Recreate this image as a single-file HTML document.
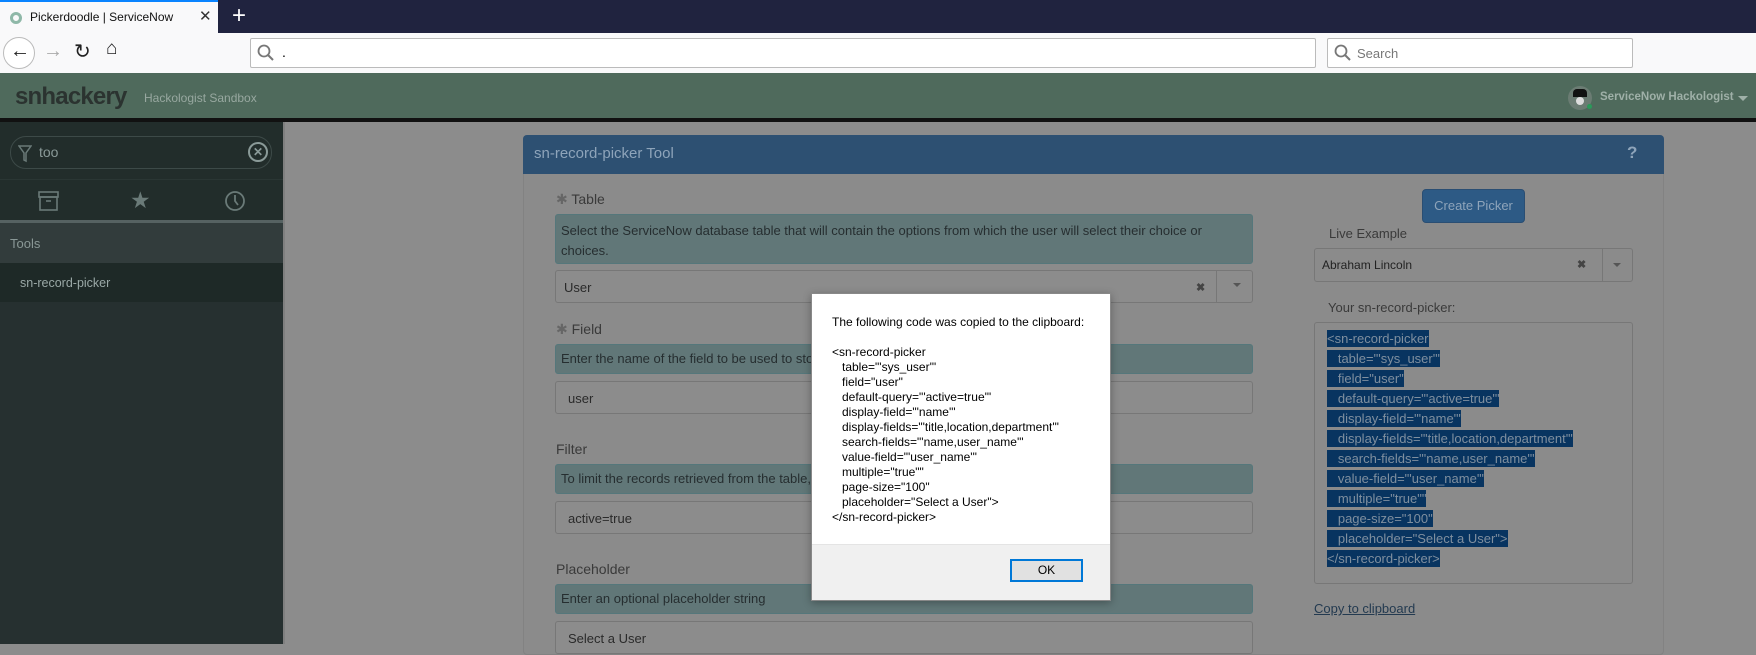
<!DOCTYPE html>
<html><head><meta charset="utf-8">
<style>
*{box-sizing:border-box;margin:0;padding:0}
body{width:1756px;height:644px;overflow:hidden;position:relative;font-family:"Liberation Sans",sans-serif;background:#8c8c8c}
.a{position:absolute}
.help{position:absolute;left:555px;width:698px;background:#617778;border:1px solid #55777b;border-radius:3px;font-size:13px;color:#262e30;padding:6px 5px;line-height:20px}
.inp{position:absolute;left:555px;width:698px;height:33px;border:1px solid #777;border-radius:3px;background:#8c8c8c;font-size:13px;color:#2a2a2a;padding:9px 8px}
.lbl{position:absolute;font-size:14px;color:#3a3a3a}
.code div{height:20px;line-height:20px}
.code span{background:#083460;color:#7f8f9f;padding:1px 0}
.dl{font-family:"Liberation Sans",Arial,sans-serif;font-size:12px;color:#000;line-height:15px}
</style></head><body>
<div class="a" style="left:0;top:0;width:1756px;height:33px;background:#20233f"></div>
<div class="a" style="left:0;top:0;width:218px;height:33px;background:#f9f9fa;border-top:2px solid #0a84ff"></div>
<div class="a" style="left:10px;top:12px;width:12px;height:12px;border-radius:50%;border:3px solid #8fb8a8"></div>
<div class="a" style="left:30px;top:10px;font-size:12px;color:#111">Pickerdoodle | ServiceNow</div>
<div class="a" style="left:199px;top:7px;font-size:15px;color:#333">✕</div>
<div class="a" style="left:232px;top:2px;font-size:24px;color:#fff;font-weight:300">+</div>
<div class="a" style="left:0;top:33px;width:1756px;height:40px;background:#f9f9fa"></div>
<div class="a" style="left:3px;top:37px;width:32px;height:32px;border:1px solid #bbb;border-radius:50%;background:#fff"></div>
<div class="a" style="left:10px;top:40px;font-size:20px;color:#222">←</div>
<div class="a" style="left:43px;top:40px;font-size:20px;color:#aaa">→</div>
<div class="a" style="left:74px;top:39px;font-size:20px;color:#222">↻</div>
<div class="a" style="left:106px;top:38px;font-size:19px;color:#222">⌂</div>
<div class="a" style="left:250px;top:38px;width:1066px;height:30px;background:#fff;border:1px solid #bbb;border-radius:2px"></div>
<svg class="a" style="left:257px;top:44px" width="18" height="18"><circle cx="7" cy="7" r="5.5" fill="none" stroke="#777" stroke-width="1.8"/><line x1="11" y1="11" x2="16" y2="16" stroke="#777" stroke-width="2"/></svg>
<div class="a" style="left:282px;top:44px;font-size:14px">.</div>
<div class="a" style="left:1327px;top:38px;width:306px;height:30px;background:#fff;border:1px solid #bbb;border-radius:2px"></div>
<svg class="a" style="left:1334px;top:44px" width="18" height="18"><circle cx="7" cy="7" r="5.5" fill="none" stroke="#777" stroke-width="1.8"/><line x1="11" y1="11" x2="16" y2="16" stroke="#777" stroke-width="2"/></svg>
<div class="a" style="left:1357px;top:46px;font-size:13px;color:#777">Search</div>
<div class="a" style="left:0;top:73px;width:1756px;height:45px;background:#4f6a5c"></div>
<div class="a" style="left:0;top:118px;width:1756px;height:4px;background:#111"></div>
<div class="a" style="left:15px;top:83px;font-size:24px;font-weight:bold;color:#2b3330;letter-spacing:-0.8px">snhackery</div>
<div class="a" style="left:144px;top:91px;font-size:12px;color:#98a8a0">Hackologist Sandbox</div>
<div class="a" style="left:1568px;top:86px;width:24px;height:24px;border-radius:50%;background:#6b7c73"></div>
<div class="a" style="left:1573px;top:89px;width:14px;height:8px;background:#111;border-radius:4px 4px 0 0"></div>
<div class="a" style="left:1576px;top:97px;width:8px;height:8px;background:#ddd;border-radius:50%"></div>
<div class="a" style="left:1587px;top:104px;width:5px;height:5px;background:#2a9a5a;border-radius:50%"></div>
<div class="a" style="left:1600px;top:91px;font-size:11.5px;color:#9fb0a8;font-weight:bold">ServiceNow Hackologist</div>
<div class="a" style="left:1738px;top:96px;border:5px solid transparent;border-top-color:#9fb0a8"></div>
<div class="a" style="left:0;top:122px;width:283px;height:522px;background:#263030"></div>
<div class="a" style="left:0;top:122px;width:283px;height:100px;background:#222d2b"></div>
<div class="a" style="left:10px;top:136px;width:262px;height:33px;border:1px solid #3d4a48;border-radius:16px"></div>
<svg class="a" style="left:18px;top:145px" width="14" height="18"><path d="M1 1h12l-5 7v8l-2-1v-7z" fill="none" stroke="#6a7a78" stroke-width="1.5"/></svg>
<div class="a" style="left:39px;top:144px;font-size:14px;color:#8a9a98">too</div>
<div class="a" style="left:248px;top:142px;width:20px;height:20px;border:2px solid #8a9a98;border-radius:50%;color:#8a9a98;font-size:12px;text-align:center;line-height:16px;font-weight:bold">✕</div>
<div class="a" style="left:0;top:179px;width:283px;height:1px;background:#2a3634"></div>
<svg class="a" style="left:38px;top:191px" width="21" height="21"><rect x="1" y="1" width="19" height="5" fill="none" stroke="#6a7a78" stroke-width="1.6"/><rect x="2" y="6" width="17" height="13" fill="none" stroke="#6a7a78" stroke-width="1.6"/><line x1="8" y1="10" x2="13" y2="10" stroke="#6a7a78" stroke-width="1.6"/></svg>
<div class="a" style="left:130px;top:187px;font-size:23px;color:#6a7a78">★</div>
<svg class="a" style="left:224px;top:190px" width="22" height="22"><circle cx="11" cy="11" r="9" fill="none" stroke="#6a7a78" stroke-width="1.8"/><path d="M11 5v6l3 4" fill="none" stroke="#6a7a78" stroke-width="1.8"/></svg>
<div class="a" style="left:0;top:220px;width:283px;height:3px;background:#566262"></div>
<div class="a" style="left:0;top:223px;width:283px;height:40px;background:#323c3c"></div>
<div class="a" style="left:10px;top:236px;font-size:13px;color:#8a9896">Tools</div>
<div class="a" style="left:0;top:263px;width:283px;height:39px;background:#1e2927"></div>
<div class="a" style="left:20px;top:276px;font-size:12.5px;color:#9aa8a6">sn-record-picker</div>
<div class="a" style="left:283px;top:122px;width:2px;height:522px;background:#7f7f7f"></div>
<div class="a" style="left:523px;top:135px;width:1141px;height:520px;border:1px solid #828282;border-radius:4px;background:#8b8b8b"></div>
<div class="a" style="left:523px;top:135px;width:1141px;height:39px;background:#2d5072;border-radius:4px 4px 0 0"></div>
<div class="a" style="left:534px;top:145px;font-size:15px;color:#8ea4ba">sn-record-picker Tool</div>
<div class="a" style="left:1627px;top:143px;font-size:17px;font-weight:bold;color:#8ea4ba">?</div>
<div class="lbl" style="left:556px;top:191px"><span style="color:#666">✱</span> Table</div>
<div class="help" style="top:214px;height:50px">Select the ServiceNow database table that will contain the options from which the user will select their choice or choices.</div>
<div class="inp" style="top:270px">User</div>
<div class="a" style="left:1196px;top:281px;font-size:11px;color:#444;font-weight:bold">✖</div>
<div class="a" style="left:1216px;top:270px;width:1px;height:33px;background:#777"></div>
<div class="a" style="left:1233px;top:283px;border:4px solid transparent;border-top-color:#555"></div>
<div class="lbl" style="left:556px;top:321px"><span style="color:#666">✱</span> Field</div>
<div class="help" style="top:344px;height:30px;padding-top:4px">Enter the name of the field to be used to store the value</div>
<div class="inp" style="top:381px;padding-left:12px">user</div>
<div class="lbl" style="left:556px;top:441px">Filter</div>
<div class="help" style="top:464px;height:30px;padding-top:4px">To limit the records retrieved from the table, enter an encoded query</div>
<div class="inp" style="top:501px;padding-left:12px">active=true</div>
<div class="lbl" style="left:556px;top:561px">Placeholder</div>
<div class="help" style="top:584px;height:30px;padding-top:4px">Enter an optional placeholder string</div>
<div class="inp" style="top:621px;padding-left:12px">Select a User</div>
<div class="a" style="left:1422px;top:189px;width:103px;height:34px;background:#2d5a85;border:1px solid #2a4e73;border-radius:4px;color:#8ea4ba;font-size:13px;text-align:center;line-height:32px">Create Picker</div>
<div class="a" style="left:1329px;top:226px;font-size:13px;color:#3a3a3a">Live Example</div>
<div class="a" style="left:1314px;top:248px;width:319px;height:34px;border:1px solid #777;border-radius:3px"></div>
<div class="a" style="left:1322px;top:258px;font-size:12px;color:#222">Abraham Lincoln</div>
<div class="a" style="left:1577px;top:258px;font-size:11px;color:#444;font-weight:bold">✖</div>
<div class="a" style="left:1602px;top:248px;width:1px;height:34px;background:#777"></div>
<div class="a" style="left:1613px;top:263px;border:4px solid transparent;border-top-color:#555"></div>
<div class="a" style="left:1328px;top:300px;font-size:13px;color:#3a3a3a">Your sn-record-picker:</div>
<div class="a" style="left:1314px;top:322px;width:319px;height:262px;border:1px solid #777;border-radius:3px"></div>
<div class="a code" style="left:1327px;top:329px;font-size:13px;white-space:pre"><div><span>&lt;sn-record-picker</span></div><div><span>   table="'sys_user'"</span></div><div><span>   field="user"</span></div><div><span>   default-query="'active=true'"</span></div><div><span>   display-field="'name'"</span></div><div><span>   display-fields="'title,location,department'"</span></div><div><span>   search-fields="'name,user_name'"</span></div><div><span>   value-field="'user_name'"</span></div><div><span>   multiple="true""</span></div><div><span>   page-size="100"</span></div><div><span>   placeholder="Select a User"&gt;</span></div><div><span>&lt;/sn-record-picker&gt;</span></div></div>
<div class="a" style="left:1314px;top:601px;font-size:13px;color:#233a50;text-decoration:underline">Copy to clipboard</div>
<div class="a" style="left:811px;top:293px;width:300px;height:308px;background:#fff;border:1px solid #888;box-shadow:0 2px 8px rgba(0,0,0,.3)"></div>
<div class="a" style="left:812px;top:544px;width:298px;height:56px;background:#f0f0f0;border-top:1px solid #e4e4e4"></div>
<div class="a dl" style="left:832px;top:315px">The following code was copied to the clipboard:</div>
<div class="a dl" style="left:832px;top:345px;white-space:pre">&lt;sn-record-picker
   table="'sys_user'"
   field="user"
   default-query="'active=true'"
   display-field="'name'"
   display-fields="'title,location,department'"
   search-fields="'name,user_name'"
   value-field="'user_name'"
   multiple="true""
   page-size="100"
   placeholder="Select a User"&gt;
&lt;/sn-record-picker&gt;</div>
<div class="a" style="left:1010px;top:559px;width:73px;height:23px;border:2px solid #0078d7;background:#e1e1e1;font-size:12px;text-align:center;line-height:19px;color:#000">OK</div>
</body></html>
